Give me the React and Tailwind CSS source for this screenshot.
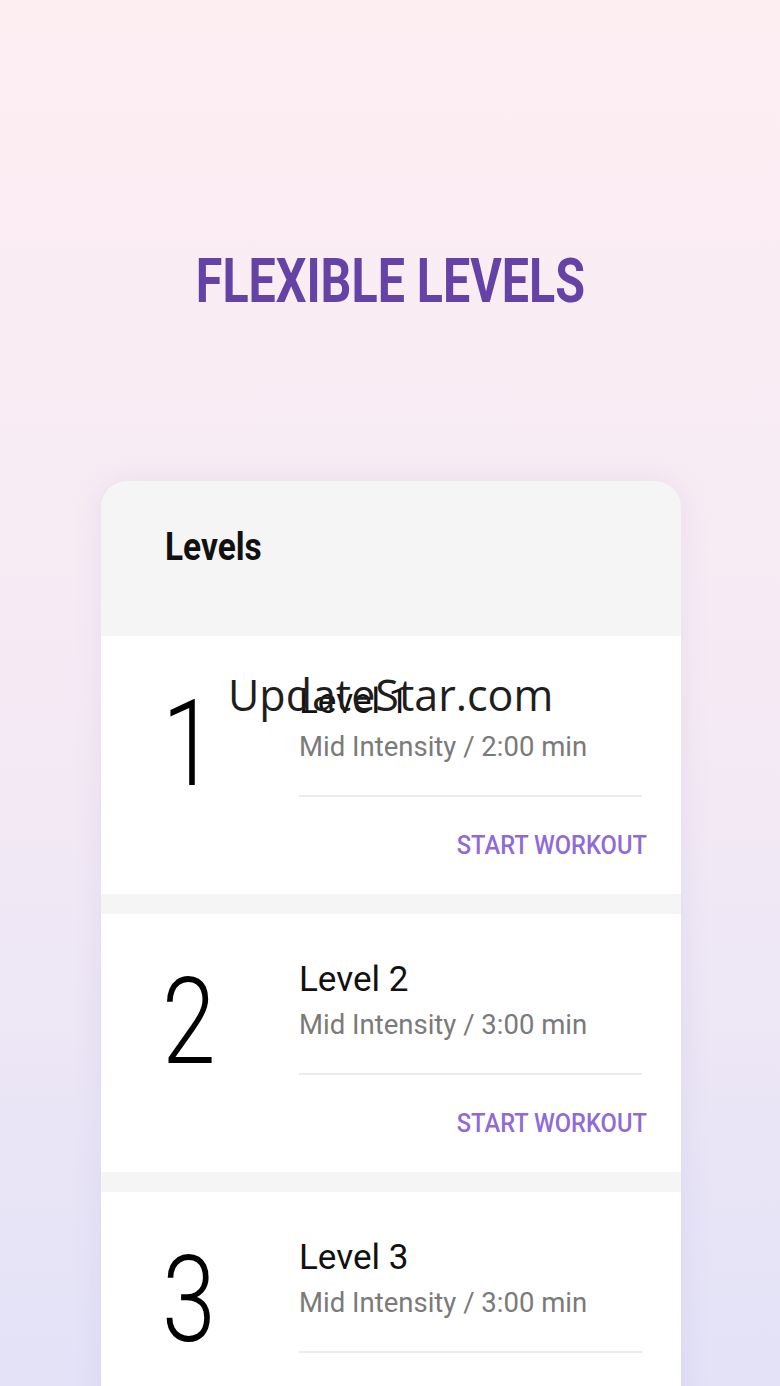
import React from "react";

const rows = [
  { n: "1", title: "Level 1", sub: "Mid Intensity / 2:00 min" },
  { n: "2", title: "Level 2", sub: "Mid Intensity / 3:00 min" },
  { n: "3", title: "Level 3", sub: "Mid Intensity / 3:00 min" },
];

function Row({ n, title, sub }) {
  return (
    <div className="flex h-[258px] bg-white">
      <div className="w-[198px] pl-[61px] pt-[48px]">
        <div className="origin-left scale-x-[0.8] text-[121px] font-light leading-none text-black">
          {n}
        </div>
      </div>
      <div className="flex flex-1 flex-col pr-[39px] pt-[48px]">
        <div className="text-[35px] leading-none text-[#111]">{title}</div>
        <div className="mt-[14px] whitespace-nowrap text-[27.5px] leading-none text-[#7a7a7a]">{sub}</div>
        <div className="mt-[34px] h-[2px] bg-[#ebebeb]" />
        <div className="mr-[-5px] mt-[35px] flex justify-end">
          <div className="origin-right scale-x-[0.91] whitespace-nowrap text-[26px] font-medium leading-none text-[#8f6ad8]">
            START WORKOUT
          </div>
        </div>
      </div>
    </div>
  );
}

export default function App() {
  return (
    <div
      className="relative h-[1386px] w-[780px] overflow-hidden bg-gradient-to-b from-[#fdeef2] via-[#f5eaf4] to-[#e3e2f7]"
      style={{ fontFamily: "Roboto, 'Noto Sans', sans-serif" }}
    >
      <div className="flex justify-center pt-[250px]">
        <h1 className="scale-x-[0.78] whitespace-nowrap text-[62px] font-bold leading-none text-[#6543a6]">
          FLEXIBLE LEVELS
        </h1>
      </div>
      <div className="ml-[101px] mt-[169px] w-[580px] overflow-hidden rounded-t-[26px] bg-[#f5f5f5] shadow-[0_0_28px_rgba(140,120,200,0.12)]">
        <div className="h-[155px] pl-[64px] pt-[47px]">
          <div className="origin-left scale-x-[0.88] text-[38px] font-bold leading-none text-[#111]">
            Levels
          </div>
        </div>
        <div className="flex flex-col gap-[20px]">
          {rows.map((r) => (
            <Row key={r.n} {...r} />
          ))}
        </div>
      </div>
      <div
        className="pointer-events-none absolute left-[228px] top-[673px] whitespace-nowrap text-[43px] leading-none text-[#1e1e1e]"
        style={{ fontFamily: "'Open Sans', sans-serif" }}
      >
        UpdateStar.com
      </div>
    </div>
  );
}
